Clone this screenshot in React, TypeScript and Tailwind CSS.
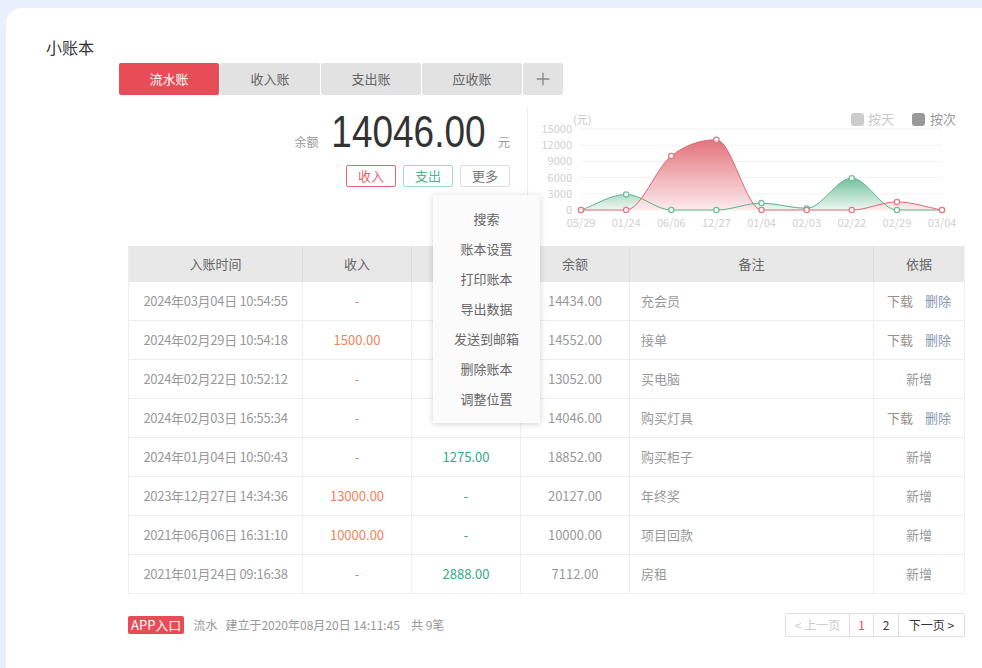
import React from "react";
import { Plus } from "lucide-react";

type Row = {
  time: string;
  income: string;
  expense: string;
  balance: string;
  note: string;
  docs: boolean;
};

const rows: Row[] = [
  { time: "2024年03月04日 10:54:55", income: "-", expense: "118.00", balance: "14434.00", note: "充会员", docs: true },
  { time: "2024年02月29日 10:54:18", income: "1500.00", expense: "-", balance: "14552.00", note: "接单", docs: true },
  { time: "2024年02月22日 10:52:12", income: "-", expense: "994.00", balance: "13052.00", note: "买电脑", docs: false },
  { time: "2024年02月03日 16:55:34", income: "-", expense: "4806.00", balance: "14046.00", note: "购买灯具", docs: true },
  { time: "2024年01月04日 10:50:43", income: "-", expense: "1275.00", balance: "18852.00", note: "购买柜子", docs: false },
  { time: "2023年12月27日 14:34:36", income: "13000.00", expense: "-", balance: "20127.00", note: "年终奖", docs: false },
  { time: "2021年06月06日 16:31:10", income: "10000.00", expense: "-", balance: "10000.00", note: "项目回款", docs: false },
  { time: "2021年01月24日 09:16:38", income: "-", expense: "2888.00", balance: "7112.00", note: "房租", docs: false },
];

const labels = ["05/29", "01/24", "06/06", "12/27", "01/04", "02/03", "02/22", "02/29", "03/04"];
const red = [0, 0, 10000, 13000, 0, 0, 0, 1500, 0];
const green = [0, 2888, 0, 0, 1275, 300, 5900, 0, 0];

const X0 = 53;
const DX = 45.125;
const Y0 = 103;
const yOf = (v: number) => Y0 - (v * 81) / 15000;

function monotone(vals: number[]): string {
  const xs = vals.map((_, i) => X0 + i * DX);
  const ys = vals.map(yOf);
  const n = xs.length;
  const d: number[] = [];
  for (let i = 0; i < n - 1; i++) d.push((ys[i + 1] - ys[i]) / (xs[i + 1] - xs[i]));
  const m: number[] = new Array(n).fill(0);
  m[0] = d[0];
  m[n - 1] = d[n - 2];
  for (let i = 1; i < n - 1; i++) m[i] = d[i - 1] * d[i] <= 0 ? 0 : (d[i - 1] + d[i]) / 2;
  for (let i = 0; i < n - 1; i++) {
    if (d[i] === 0) {
      m[i] = 0;
      m[i + 1] = 0;
    } else {
      const a = m[i] / d[i];
      const b = m[i + 1] / d[i];
      const s = a * a + b * b;
      if (s > 9) {
        const t = 3 / Math.sqrt(s);
        m[i] = t * a * d[i];
        m[i + 1] = t * b * d[i];
      }
    }
  }
  let p = `M${xs[0]},${ys[0]}`;
  for (let i = 0; i < n - 1; i++) {
    const h = xs[i + 1] - xs[i];
    p += ` C${xs[i] + h / 3},${ys[i] + (m[i] * h) / 3} ${xs[i + 1] - h / 3},${ys[i + 1] - (m[i + 1] * h) / 3} ${xs[i + 1]},${ys[i + 1]}`;
  }
  return p;
}

function Chart() {
  const redLine = monotone(red);
  const greenLine = monotone(green);
  const lastX = X0 + 8 * DX;
  const close = ` L${lastX},${Y0} L${X0},${Y0} Z`;
  const grid = [0, 3000, 6000, 9000, 12000, 15000];
  return (
    <svg width="436" height="128" viewBox="0 0 436 128" className="block">
      <defs>
        <linearGradient id="gr" x1="0" y1="33" x2="0" y2="103" gradientUnits="userSpaceOnUse">
          <stop offset="0" stopColor="#e3747d" />
          <stop offset="1" stopColor="#fcebed" />
        </linearGradient>
        <linearGradient id="gg" x1="0" y1="70" x2="0" y2="103" gradientUnits="userSpaceOnUse">
          <stop offset="0" stopColor="#6dbf98" />
          <stop offset="1" stopColor="#eef8f3" />
        </linearGradient>
      </defs>
      <text x="45" y="17" fontSize="11" fill="#c8c8c8">(元)</text>
      <rect x="323" y="6" width="13" height="13" rx="3" fill="#cccccc" />
      <text x="340" y="17" fontSize="13" fill="#c8c8c8">按天</text>
      <rect x="384" y="6" width="13" height="13" rx="3" fill="#999999" />
      <text x="402" y="17" fontSize="13" fill="#999999">按次</text>
      {grid.map((g) => (
        <g key={g}>
          <line x1={X0} x2={lastX} y1={yOf(g)} y2={yOf(g)} stroke="#f2f2f2" strokeWidth="1" />
          <text x="44" y={yOf(g) + 4} fontSize="11" fill="#cfcfcf" textAnchor="end">
            {g}
          </text>
        </g>
      ))}
      {labels.map((l, i) => (
        <text key={l} x={X0 + i * DX} y="120" fontSize="11" fill="#cfcfcf" textAnchor="middle">
          {l}
        </text>
      ))}
      <path d={greenLine + close} fill="url(#gg)" />
      <path d={redLine + close} fill="url(#gr)" />
      <path d={greenLine} fill="none" stroke="#5bb189" strokeWidth="1" />
      <path d={redLine} fill="none" stroke="#e06670" strokeWidth="1" />
      {green.map((v, i) => (
        <circle key={"g" + i} cx={X0 + i * DX} cy={yOf(v)} r="2.6" fill="#fff" stroke="#6cc09a" strokeWidth="1.3" />
      ))}
      {red.map((v, i) => (
        <circle key={"r" + i} cx={X0 + i * DX} cy={yOf(v)} r="2.6" fill="#fff" stroke="#e77a83" strokeWidth="1.3" />
      ))}
    </svg>
  );
}

const widths = ["w-[174px]", "w-[109px]", "w-[109px]", "w-[109px]", "w-[244px]", "w-[90px]"];

export default function App() {
  const menu = ["搜索", "账本设置", "打印账本", "导出数据", "发送到邮箱", "删除账本", "调整位置"];
  return (
    <div className="w-[982px] h-[668px] overflow-hidden bg-[#e8f0fd] pt-[8px] pl-[6px] font-['Noto_Sans_CJK_SC',sans-serif]">
      <div className="relative h-[660px] bg-white rounded-tl-[16px]">
        <div className="pl-[40px] pt-[27px] text-[16px] leading-[24px] text-[#333]">小账本</div>

        <div className="flex gap-[1px] ml-[113px] mt-[4px]">
          <div className="w-[100px] h-[32px] rounded-[2px] bg-[#e84c56] text-white text-[13px] flex items-center justify-center">流水账</div>
          <div className="w-[100px] h-[32px] rounded-[2px] bg-[#e2e2e2] text-[#666] text-[13px] flex items-center justify-center">收入账</div>
          <div className="w-[100px] h-[32px] rounded-[2px] bg-[#e2e2e2] text-[#666] text-[13px] flex items-center justify-center">支出账</div>
          <div className="w-[100px] h-[32px] rounded-[2px] bg-[#e2e2e2] text-[#666] text-[13px] flex items-center justify-center">应收账</div>
          <div className="w-[40px] h-[32px] rounded-[2px] bg-[#e2e2e2] text-[#8a8a8a] flex items-center justify-center">
            <Plus size={20} strokeWidth={1.6} />
          </div>
        </div>

        <div className="ml-[122px] w-[838px]">
          <div className="flex h-[139px] mt-[12px]">
            <div className="w-[400px] h-[128px] border-r border-[#eeeeee] flex flex-col items-end pr-[17px] pt-[3px]">
              <div className="flex items-baseline">
                <span className="text-[12px] text-[#999] mr-[-16px]">余额</span>
                <span className="inline-block origin-right scale-x-[0.84] text-[44px] leading-[44px] text-[#333] font-['Liberation_Sans',sans-serif]">14046.00</span>
                <span className="text-[12px] text-[#999] ml-[12px]">元</span>
              </div>
              <div className="flex gap-[7px] mt-[11px]">
                <div className="w-[50px] h-[22px] border border-[#e8646d] rounded-[2px] text-[#e8646d] text-[13px] leading-[20px] text-center">收入</div>
                <div className="w-[50px] h-[22px] border border-[#9fdcc5] rounded-[2px] text-[#4fb48f] text-[13px] leading-[20px] text-center">支出</div>
                <div className="w-[50px] h-[22px] border border-[#dddddd] rounded-[2px] text-[#777] text-[13px] leading-[20px] text-center">更多</div>
              </div>
            </div>
            <div className="flex-1">
              <Chart />
            </div>
          </div>

          <div className="w-[837px] border-l border-r border-[#eeeeee]">
            <div className="flex h-[36px] bg-[#e8e8e8] text-[13px] text-[#666]">
              {["入账时间", "收入", "支出", "余额", "备注", "依据"].map((h, i) => (
                <div key={h} className={`${widths[i]} flex items-center justify-center ${i < 5 ? "border-r border-[#dddddd]" : ""}`}>
                  {h}
                </div>
              ))}
            </div>
            {rows.map((r) => (
              <div key={r.time} className="flex h-[39px] border-b border-[#eeeeee] text-[13px] text-[#999]">
                <div className="w-[174px] border-r border-[#eeeeee] flex items-center justify-center tracking-[-0.3px]">{r.time}</div>
                <div className="w-[109px] border-r border-[#eeeeee] flex items-center justify-center text-[#f0845a]">{r.income}</div>
                <div className="w-[109px] border-r border-[#eeeeee] flex items-center justify-center text-[#37a885]">{r.expense}</div>
                <div className="w-[109px] border-r border-[#eeeeee] flex items-center justify-center">{r.balance}</div>
                <div className="w-[244px] border-r border-[#eeeeee] flex items-center pl-[11px]">{r.note}</div>
                <div className="w-[90px] flex items-center justify-center gap-[12px]">
                  {r.docs ? (
                    <>
                      <span className="text-[#998f86]">下载</span>
                      <span className="text-[#8898b0]">删除</span>
                    </>
                  ) : (
                    <span>新增</span>
                  )}
                </div>
              </div>
            ))}
          </div>

          <div className="w-[837px] flex items-center justify-between h-[24px] mt-[19px]">
            <div className="flex items-center text-[12px] text-[#999]">
              <span className="h-[18px] px-[3px] rounded-[2px] bg-[#e84c56] text-white text-[13px] leading-[18px]">APP入口</span>
              <span className="ml-[9px]">流水</span>
              <span className="ml-[8px]">建立于2020年08月20日 14:11:45</span>
              <span className="ml-[11px]">共 9笔</span>
            </div>
            <div className="flex h-[24px] border border-[#dddddd] rounded-[2px] text-[12px]">
              <div className="w-[64px] flex items-center justify-center text-[#cccccc] border-r border-[#dddddd]">&lt; 上一页</div>
              <div className="w-[24px] flex items-center justify-center text-[#e84c56] border-r border-[#dddddd]">1</div>
              <div className="w-[25px] flex items-center justify-center text-[#333] border-r border-[#dddddd]">2</div>
              <div className="w-[65px] flex items-center justify-center text-[#333]">下一页 &gt;</div>
            </div>
          </div>
        </div>

        <div className="absolute left-[427px] top-[187px] w-[107px] h-[228px] bg-[#fbfbfb] shadow-[0_1px_6px_rgba(0,0,0,0.18)] pt-[9px] text-[13px] text-[#666]">
          {menu.map((m) => (
            <div key={m} className="h-[30px] flex items-center justify-center">
              {m}
            </div>
          ))}
        </div>
      </div>
    </div>
  );
}
